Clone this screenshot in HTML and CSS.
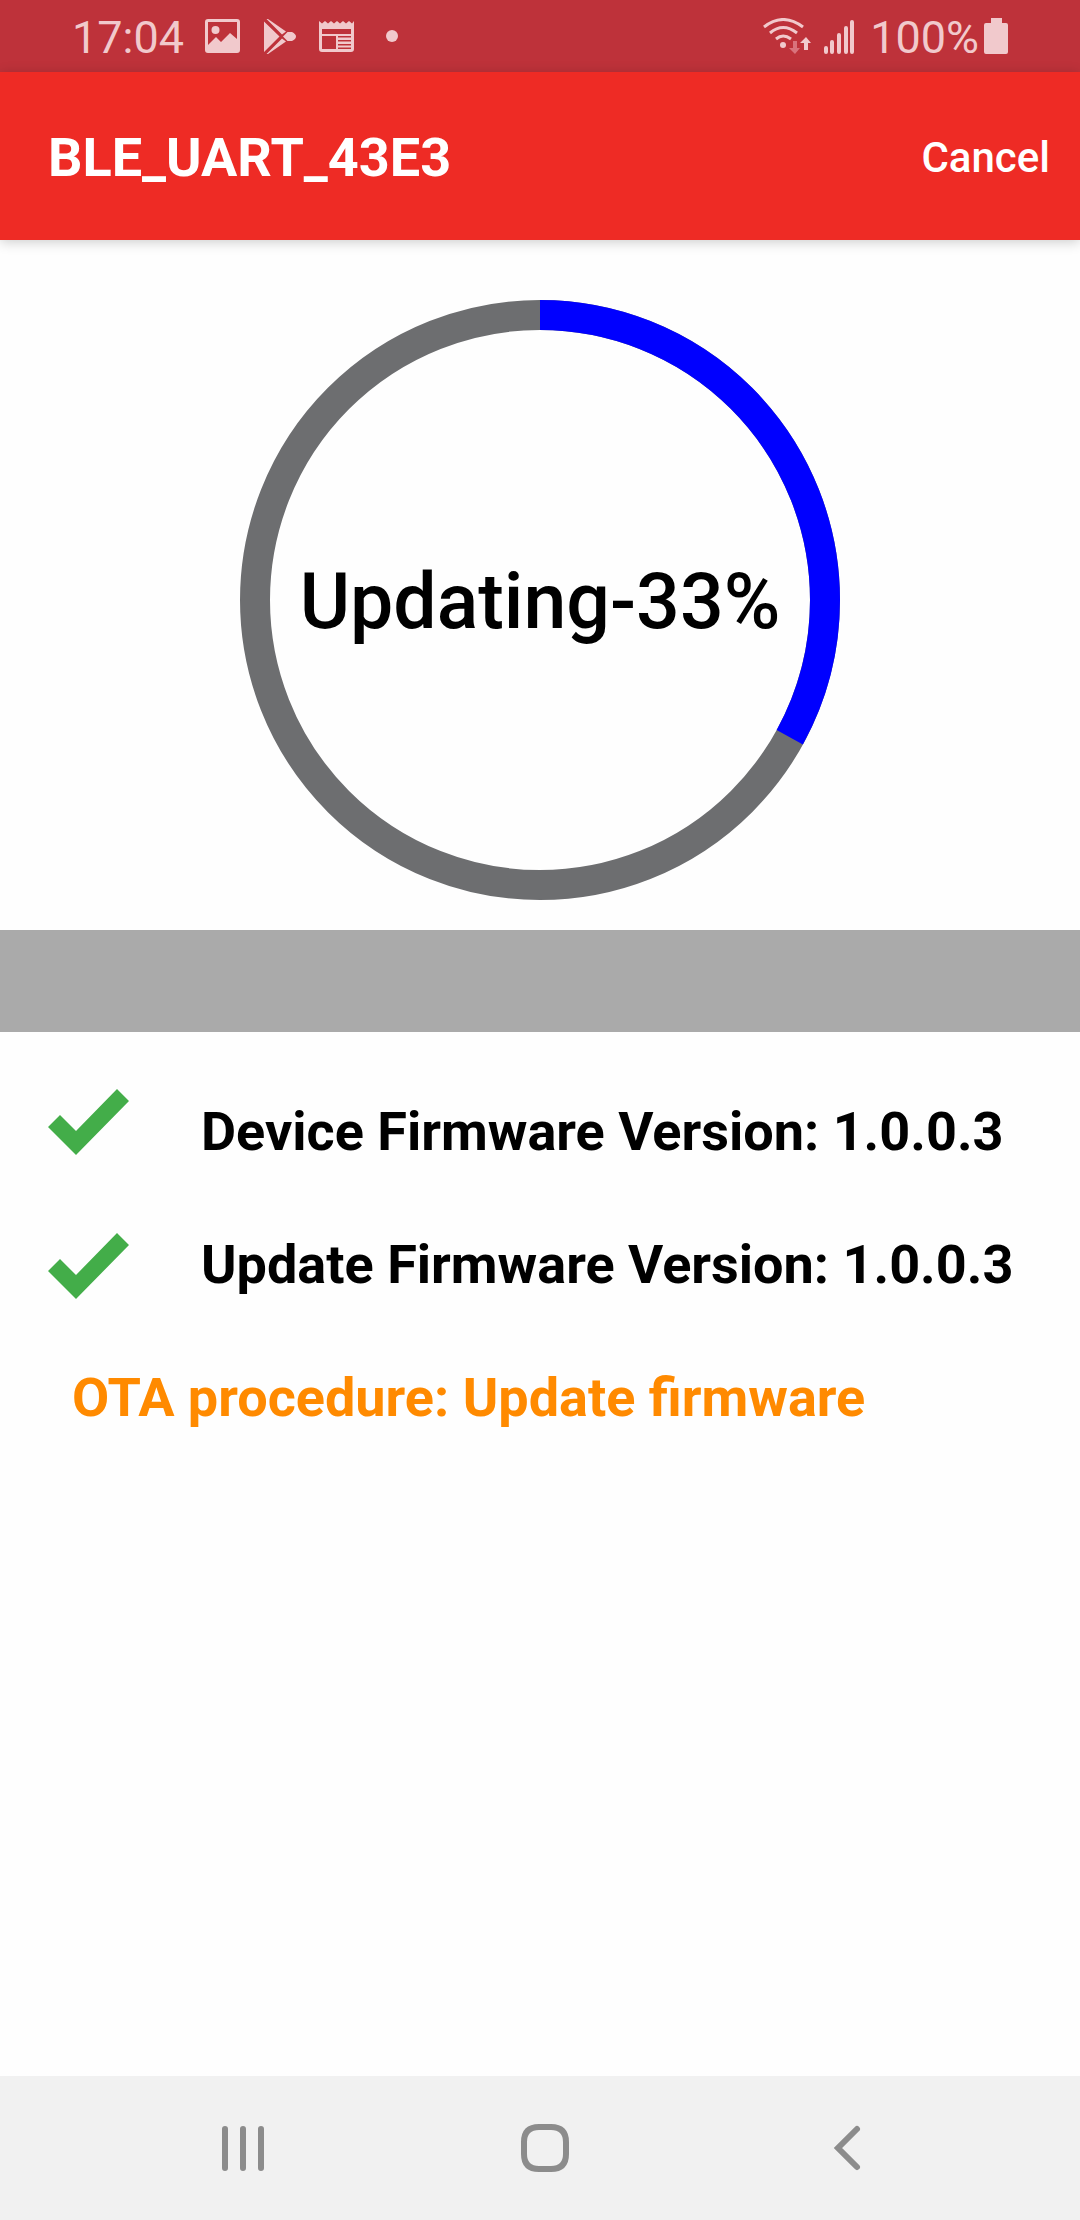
FILE: index.html
```html
<!DOCTYPE html>
<html lang="en">
<head>
<meta charset="utf-8">
<meta name="viewport" content="width=device-width, initial-scale=1">
<title>BLE_UART_43E3</title>
<link rel="stylesheet" href="styles.css">
</head>
<body>
<div class="status-bar">
  <div class="status-left">
    <span class="status-text">17:04</span>
    <svg class="status-icon" width="36" height="36" viewBox="0 0 36 36" aria-hidden="true">
      <path fill-rule="evenodd" d="M3 1H32Q35 1 35 4V32Q35 35 32 35H3Q0 35 0 32V4Q0 1 3 1ZM3 4V27L11 19L16 24L25 15L32 21V4Z"/>
      <circle cx="10.500" cy="12" r="4"/>
    </svg>
    <svg class="status-icon" width="36" height="36" viewBox="0 0 36 36" aria-hidden="true">
      <path d="M2 3.500L17.500 18.500L2 34ZM4.500 1H6L24 13.500L20 16.500ZM4.500 36H6L24 23.500L20 20.500ZM25.500 14H30Q34 16 34 18.500Q34 21 30 23H25.500L21 18.500Z"/>
    </svg>
    <svg class="status-icon" width="36" height="36" viewBox="0 0 36 36" aria-hidden="true">
      <path fill-rule="evenodd" d="M0 3L3 5.500L6 3L9 5.500L12 3L15 5.500L18 3L21 5.500L24 3L27 5.500L30 3L33 5.500L35 3V31Q35 34 32 34H3Q0 34 0 31ZM3 11V16H32V11ZM3 18V31H17V18ZM19 18V19.500H32V18ZM19 22V23.500H32V22ZM19 26V27.500H32V26ZM19 29.500V31H32V29.500Z"/>
    </svg>
    <svg class="status-icon status-dot" width="12" height="12" viewBox="0 0 12 12" aria-hidden="true"><circle cx="6" cy="6" r="6"/></svg>
  </div>
  <div class="status-right">
    <svg class="status-icon" width="48" height="36" viewBox="0 0 48 36" aria-hidden="true">
      <g class="waves">
        <path d="M1 9Q20 -6 40 9M7 15Q20 4 34 15M13 21Q20 15 28 21"/>
      </g>
      <circle cx="20" cy="27" r="3"/>
      <path d="M43 19L48 25H45V32H41V25H37Z"/>
      <path class="faded" d="M30 23H34V30H37L32 36L26 30H30Z"/>
    </svg>
    <svg class="status-icon" width="32" height="36" viewBox="0 0 32 36" aria-hidden="true">
      <path class="bars" d="M3 30V34M9 24V34M16 17V34M23 10V34M29 4V34"/>
    </svg>
    <div class="battery">
      <span class="status-text">100%</span>
      <svg class="status-icon" width="24" height="36" viewBox="0 0 24 36" aria-hidden="true"><path d="M7 0H18V5H22Q24 5 24 7V34Q24 36 22 36H2Q0 36 0 34V7Q0 5 2 5H7Z"/></svg>
    </div>
  </div>
</div>

<header class="app-bar">
  <h1 class="app-title">BLE_UART_43E3</h1>
  <button class="cancel" type="button">Cancel</button>
</header>

<main class="content">
  <section class="progress" role="progressbar" aria-label="Firmware update" aria-valuemin="0" aria-valuemax="100" aria-valuenow="33">
    <svg class="ring" viewBox="0 0 600 600" aria-hidden="true">
      <circle class="ring-track" cx="300" cy="300" r="285"/>
      <circle class="ring-value" cx="300" cy="300" r="285" pathLength="100" stroke-dasharray="33 100" transform="rotate(-90 300 300)"/>
    </svg>
    <span class="progress-label">Updating-33%</span>
  </section>

  <div class="divider"></div>

  <section class="versions">
    <div class="checks">
      <svg class="check" viewBox="0 0 81 66" aria-hidden="true"><path d="M0 38L12 26L28 42L69 0L81 12L28 66Z"/></svg>
      <svg class="check" viewBox="0 0 81 66" aria-hidden="true"><path d="M0 38L12 26L28 42L69 0L81 12L28 66Z"/></svg>
    </div>
    <div class="version-list">
      <p class="line">Device Firmware Version: 1.0.0.3</p>
      <p class="line">Update Firmware Version: 1.0.0.3</p>
    </div>
  </section>
  <p class="line procedure">OTA procedure: Update firmware</p>
</main>

<nav class="nav-bar" aria-label="System navigation">
  <button class="nav-button" type="button" aria-label="Recent apps">
    <svg width="48" height="48" viewBox="0 0 48 48" aria-hidden="true"><path d="M6 5V44M24 5V44M42 5V44"/></svg>
  </button>
  <button class="nav-button" type="button" aria-label="Home">
    <svg width="48" height="48" viewBox="0 0 48 48" aria-hidden="true"><path d="M18 3H30Q45 3 45 18V30Q45 45 30 45H18Q3 45 3 30V18Q3 3 18 3Z"/></svg>
  </button>
  <button class="nav-button" type="button" aria-label="Back">
    <svg width="48" height="48" viewBox="0 0 48 48" aria-hidden="true"><path d="M34 5L15 24L34 43"/></svg>
  </button>
</nav>
</body>
</html>
```
FILE: styles.css
```css
* {
  box-sizing: border-box;
}

body {
  display: flex;
  flex-direction: column;
  min-height: 100vh;
  margin: 0;
  background: #fefefe;
  color: #000;
  font-family: Roboto, "Liberation Sans", sans-serif;
}

h1,
p {
  margin: 0;
}

button {
  padding: 0;
  border: 0;
  background: none;
  color: inherit;
  font: inherit;
}

/* Status bar */
.status-bar {
  display: flex;
  justify-content: space-between;
  align-items: center;
  height: 72px;
  padding: 0 72px;
  background: #be323a;
  color: #f1c9cc;
}

.status-left,
.status-right {
  display: flex;
  align-items: center;
}

.status-left {
  gap: 21px;
}

.status-right {
  gap: 12px;
}

.status-text {
  padding-top: 3px;
  font-size: 45px;
  line-height: 56px;
}

.status-icon {
  flex: none;
  fill: #f1c9cc;
}

.status-dot {
  margin-left: 10px;
}

.waves,
.bars {
  fill: none;
  stroke: #f1c9cc;
}

.waves {
  stroke-width: 3px;
}

.bars {
  stroke-width: 4px;
  stroke-linecap: round;
}

.faded {
  fill: #d9737c;
}

.battery {
  display: flex;
  align-items: center;
  gap: 5px;
  margin-left: 3px;
}

/* App bar */
.app-bar {
  display: flex;
  justify-content: space-between;
  align-items: center;
  height: 168px;
  padding: 4px 30px 0 48px;
  background: #ee2b25;
  color: #fff;
  box-shadow: 0 2px 12px rgba(0, 0, 0, 0.2);
}

.app-title {
  font-size: 54px;
  line-height: 64px;
  font-weight: 700;
}

.cancel {
  font-size: 42px;
  line-height: 48px;
  font-weight: 500;
}

/* Progress ring */
.content {
  flex: 1;
}

.progress {
  display: grid;
  place-items: center;
  padding: 60px 24px 30px;
}

.ring,
.progress-label {
  grid-area: 1 / 1;
}

.ring {
  width: 100%;
  max-width: 600px;
  fill: none;
  stroke-width: 30px;
}

.ring-track {
  stroke: #6d6e70;
}

.ring-value {
  stroke: #00f;
}

.progress-label {
  padding-top: 4px;
  font-size: 77px;
  line-height: 88px;
  font-weight: 500;
}

.divider {
  height: 102px;
  background: #aaa;
}

/* Firmware versions */
.versions {
  display: flex;
  gap: 72px;
  padding: 18px 48px 0;
}

.checks {
  display: grid;
  grid-auto-rows: 144px;
  align-items: center;
}

.check {
  width: 81px;
  height: 66px;
  fill: #43ad49;
}

.version-list {
  display: flex;
  flex-direction: column;
  gap: 69px;
  padding-top: 50px;
}

.line {
  font-size: 54px;
  line-height: 64px;
  font-weight: 700;
}

.procedure {
  padding: 28px 72px;
  color: #ff8a00;
}

/* Navigation bar */
.nav-bar {
  display: flex;
  height: 144px;
  padding: 0 82px 0 92px;
  background: #f1f1f1;
}

.nav-button {
  display: grid;
  flex: 1;
  place-items: center;
}

.nav-button svg {
  fill: none;
  stroke: #8c8c8c;
  stroke-width: 6px;
  stroke-linecap: round;
}
```
